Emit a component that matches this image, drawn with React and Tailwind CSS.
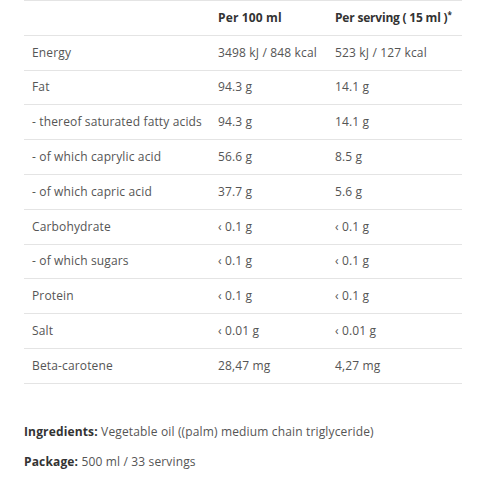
import React from "react";

const rows = [
  ["Energy", "3498 kJ / 848 kcal", "523 kJ / 127 kcal"],
  ["Fat", "94.3 g", "14.1 g"],
  ["- thereof saturated fatty acids", "94.3 g", "14.1 g"],
  ["- of which caprylic acid", "56.6 g", "8.5 g"],
  ["- of which capric acid", "37.7 g", "5.6 g"],
  ["Carbohydrate", "‹ 0.1 g", "‹ 0.1 g"],
  ["- of which sugars", "‹ 0.1 g", "‹ 0.1 g"],
  ["Protein", "‹ 0.1 g", "‹ 0.1 g"],
  ["Salt", "‹ 0.01 g", "‹ 0.01 g"],
  ["Beta-carotene", "28,47 mg", "4,27 mg"],
];

export default function App() {
  return (
    <div className="w-[478px] h-[478px] bg-white text-[12px] tracking-[0.15px] text-[#555] font-['Open_Sans',sans-serif]">
      <div className="ml-[24px] w-[438px] border-t border-[#e4e4e4]">
        {/* Header */}
        <div className="flex h-[34.8px] items-center border-b border-[#e4e4e4] font-bold text-[#333]">
          <div className="w-[186px] pl-[8px]"></div>
          <div className="w-[117px] pl-[8px]">Per 100 ml</div>
          <div className="flex-1 pl-[8px] tracking-[-0.2px] whitespace-nowrap">
            Per serving ( 15 ml )<span className="text-[8px] align-top">*</span>
          </div>
        </div>
        {rows.map((r) => (
          <div key={r[0]} className="flex h-[34.8px] items-center border-b border-[#e4e4e4]">
            <div className="w-[186px] pl-[8px] whitespace-nowrap">{r[0]}</div>
            <div className="w-[117px] pl-[8px] whitespace-nowrap">{r[1]}</div>
            <div className="flex-1 pl-[8px] whitespace-nowrap">{r[2]}</div>
          </div>
        ))}
      </div>

      <div className="ml-[24px] mt-[39px] space-y-[12px]">
        <p>
          <span className="font-bold text-[#333]">Ingredients:</span> Vegetable oil ((palm) medium chain triglyceride)
        </p>
        <p>
          <span className="font-bold text-[#333]">Package:</span> 500 ml / 33 servings
        </p>
      </div>
    </div>
  );
}
